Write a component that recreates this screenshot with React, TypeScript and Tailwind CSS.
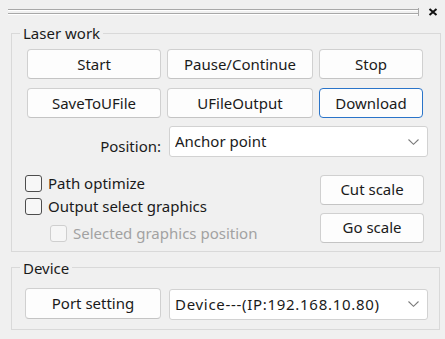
const base =
  "h-[30px] flex items-center justify-center bg-[#fdfdfd] border rounded-[4px] text-[15px] text-[#1a1a1a]";
const btn = base + " border-[#d0d0d0] border-b-[#c4c4c4]";
const focused = base + " border-[#2a74c9]";

function Chevron() {
  return (
    <svg width="13" height="8" viewBox="0 0 13 8" className="shrink-0">
      <path d="M1.5 1.5 L6.5 6.3 L11.5 1.5" fill="none" stroke="#7a7a7a" strokeWidth="1.1" />
    </svg>
  );
}

function Combo({ value, className, textClass }: { value: string; className?: string; textClass?: string }) {
  return (
    <div
      className={
        "w-[259px] h-[31px] flex items-center pl-[5px] pr-[7px] bg-white border border-[#d2d2d2] rounded-[3px] text-[15px] text-[#1a1a1a] " +
        (className ?? "")
      }
    >
      <span className={"flex-1 truncate " + (textClass ?? "")}>{value}</span>
      <Chevron />
    </div>
  );
}

function Check({ label, disabled }: { label: string; disabled?: boolean }) {
  return (
    <div className="h-[17px] flex items-center gap-[6px]">
      <div
        className={
          "w-[17px] h-[17px] rounded-[3px] border " +
          (disabled ? "border-[#cfcfcf] bg-[#f6f6f6]" : "border-[#4d4d4d] bg-[#f7f7f7]")
        }
      />
      <span className={"text-[15px] leading-none " + (disabled ? "text-[#a2a2a2]" : "text-[#1a1a1a]")}>
        {label}
      </span>
    </div>
  );
}

export default function App() {
  return (
    <div
      className="w-[445px] h-[339px] bg-[#f0f0f0] pt-[8px] overflow-hidden"
      style={{ fontFamily: "'Noto Sans', 'Open Sans', sans-serif" }}
    >
      {/* dock title grip */}
      <div className="flex items-center pl-[8px] h-[8px]">
        <div className="w-[411px] h-[8px] border-r border-[#a8a8a8] py-[1px] flex flex-col gap-[2px]">
          <div className="h-[2px] border-t border-[#a8a8a8] border-b border-b-white" />
          <div className="h-[2px] border-t border-[#a8a8a8] border-b border-b-white" />
        </div>
        <svg className="ml-[9px]" width="10" height="8" viewBox="0 0 10 8">
          <path d="M1.5 1 L8.5 7 M8.5 1 L1.5 7" stroke="#111" strokeWidth="2" />
        </svg>
      </div>

      <fieldset className="ml-[11px] mt-[7px] w-[430px] border border-[#d9d9d9] pl-[15px] pt-[6px] pb-[8px]">
        <legend className="-ml-[7px] px-[3px] h-[20px] leading-[20px] text-[15px] text-[#1a1a1a]">
          Laser work
        </legend>

        <div className="flex gap-[6px]">
          <div className={btn + " w-[134px]"}>Start</div>
          <div className={btn + " w-[146px]"}>Pause/Continue</div>
          <div className={btn + " w-[104px]"}>Stop</div>
        </div>
        <div className="flex gap-[6px] mt-[9px]">
          <div className={btn + " w-[134px]"}>SaveToUFile</div>
          <div className={btn + " w-[146px]"}>UFileOutput</div>
          <div className={focused + " w-[104px]"}>Download</div>
        </div>

        <div className="flex mt-[8px] gap-[8px]">
          <div className="w-[134px] pt-[9px] text-right text-[15px] text-[#1a1a1a]">Position:</div>
          <Combo value="Anchor point" />
        </div>

        <div className="flex mt-[17px]">
          <div className="-ml-[2px] flex-1 flex flex-col">
            <Check label="Path optimize" />
            <div className="mt-[6px]">
              <Check label="Output select graphics" />
            </div>
            <div className="mt-[10px] pl-[25px]">
              <Check label="Selected graphics position" disabled />
            </div>
          </div>
          <div className="flex flex-col gap-[8px] mr-[16px]">
            <div className={btn + " w-[104px]"}>Cut scale</div>
            <div className={btn + " w-[104px]"}>Go scale</div>
          </div>
        </div>
      </fieldset>

      <fieldset className="ml-[11px] mt-[6px] w-[429px] border border-[#d9d9d9] pl-[13px] pt-[10px] pb-[9px]">
        <legend className="-ml-[5px] px-[3px] h-[20px] leading-[20px] text-[15px] text-[#1a1a1a]">
          Device
        </legend>
        <div className="flex gap-[8px]">
          <div className={btn + " w-[136px] h-[31px]"}>Port setting</div>
          <Combo value="Device---(IP:192.168.10.80)" className="mt-[1px]" textClass="tracking-[0.7px]" />
        </div>
      </fieldset>
    </div>
  );
}
